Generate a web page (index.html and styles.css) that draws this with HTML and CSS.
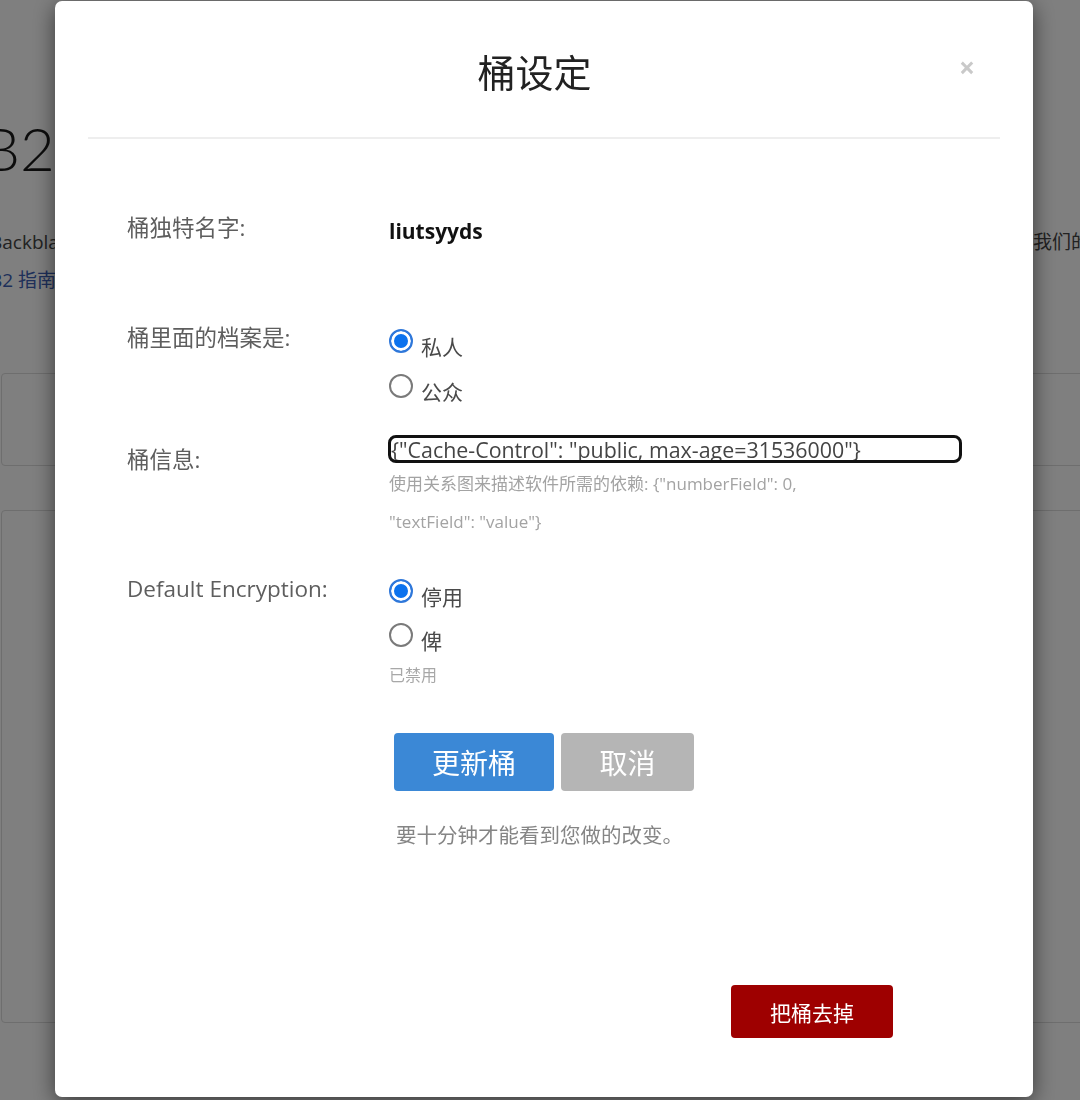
FILE: index.html
```html
<!DOCTYPE html>
<html lang="zh-CN">
<head>
<meta charset="utf-8">
<title>桶设定</title>
<link rel="stylesheet" href="styles.css">
</head>
<body>
<div class="page">
  <h1 class="page-title">B2</h1>
  <div class="intro"><span class="intro-left">Backblaze</span><span class="intro-right">我们的</span></div>
  <a class="guide" href="#">B2 指南</a>
  <div class="card card-top"></div>
  <div class="card card-main"></div>
</div>

<div class="backdrop"></div>

<div class="modal">
  <div class="modal-header">
    <h4 class="modal-title">桶设定</h4>
    <span class="close">×</span>
  </div>
  <div class="modal-body">
    <div class="form-row row-name">
      <div class="label">桶独特名字:</div>
      <div class="value name">liutsyyds</div>
    </div>

    <div class="form-row row-access">
      <div class="label">桶里面的档案是:</div>
      <div class="radio-group">
        <div class="option"><span class="radio checked"></span><span>私人</span></div>
        <div class="option"><span class="radio"></span><span>公众</span></div>
      </div>
    </div>

    <div class="form-row row-info">
      <div class="label label-info">桶信息:</div>
      <div class="info-field">
        <input class="meta-input" type="text" value='{"Cache-Control": "public, max-age=31536000"}' readonly>
        <div class="help">使用关系图来描述软件所需的依赖: {"numberField": 0, "textField": "value"}</div>
      </div>
    </div>

    <div class="form-row row-enc">
      <div class="label">Default Encryption:</div>
      <div class="radio-group enc-group">
        <div class="option"><span class="radio checked"></span><span>停用</span></div>
        <div class="option"><span class="radio"></span><span>俾</span></div>
        <div class="disabled-note">已禁用</div>
      </div>
    </div>

    <div class="actions">
      <button class="btn btn-primary">更新桶</button>
      <button class="btn btn-cancel">取消</button>
    </div>
    <div class="note">要十分钟才能看到您做的改变。</div>

    <div class="footer">
      <button class="btn btn-danger">把桶去掉</button>
    </div>
  </div>
</div>
</body>
</html>
```

FILE: styles.css
```css
html, body {
  margin: 0;
  padding: 0;
}

body {
  width: 1080px;
  height: 1100px;
  overflow: hidden;
  background: #ffffff;
  font-family: "Open Sans", "Noto Sans CJK SC", sans-serif;
  color: #333;
}

/* underlying page */
.page {
  width: 1100px;
  margin-left: -10px;
  display: flex;
  flex-direction: column;
}

.page-title {
  margin: 113px 0 0 -8px;
  font-family: "Lato", "Noto Sans CJK SC", sans-serif;
  font-weight: 300;
  font-size: 60px;
  line-height: 70px;
  color: #1a1a1a;
}

.intro {
  margin-top: 45px;
  display: flex;
  justify-content: space-between;
  font-size: 19px;
  line-height: 28px;
  color: #444;
  white-space: nowrap;
}

.guide {
  margin-top: 10px;
  font-size: 19px;
  line-height: 28px;
  color: #3d5fb5;
  text-decoration: none;
}

.card {
  margin-left: 11px;
  border: 1px solid #dcdcdc;
  border-radius: 4px;
  background: #fff;
}

.card-top {
  margin-top: 79px;
  height: 91px;
}

.card-main {
  margin-top: 44px;
  height: 511px;
}

.backdrop {
  position: fixed;
  inset: 0;
  background: rgba(0, 0, 0, 0.5);
}

/* modal */
.modal {
  position: fixed;
  left: 55px;
  top: 1px;
  width: 978px;
  height: 1096px;
  background: #fff;
  border-radius: 7px;
  box-shadow: 0 5px 22px rgba(0, 0, 0, 0.55);
  display: flex;
  flex-direction: column;
}

.modal-header {
  height: 138px;
  box-sizing: border-box;
  margin: 0 33px;
  padding: 6px 27px 0 22px;
  border-bottom: 2px solid #eeeeee;
  display: flex;
  align-items: center;
}

.modal-title {
  flex: 1;
  margin: 0;
  text-align: center;
  font-weight: 400;
  font-size: 38px;
  line-height: 50px;
  color: #222;
}

.close {
  width: 14px;
  margin-top: -10px;
  font-size: 28px;
  font-weight: 700;
  line-height: 28px;
  color: #c9c9c9;
  text-align: center;
}

.modal-body {
  padding: 74px 72px 0;
  display: flex;
  flex-direction: column;
}

.form-row {
  display: grid;
  grid-template-columns: 262px 1fr;
}

.label {
  font-size: 22.5px;
  line-height: 30px;
  color: #5e5e5e;
}

.value.name {
  padding-top: 3px;
  font-size: 21px;
  line-height: 30px;
  font-weight: 700;
  color: #111;
}

.row-name {
  margin-bottom: 77px;
}

.radio-group {
  padding-top: 9px;
  display: flex;
  flex-direction: column;
  gap: 15px;
}

.option {
  display: flex;
  align-items: flex-start;
  font-size: 21px;
  line-height: 30px;
  color: #4a4a4a;
}

.radio {
  width: 24px;
  height: 24px;
  box-sizing: border-box;
  border-radius: 50%;
  border: 2px solid #7a7a7a;
  margin: -3px 8px 0 0;
  background: #fff;
}

.radio.checked {
  border-color: #2f77d9;
  background: #0b72ee;
  box-shadow: inset 0 0 0 3px #fff;
}

.row-info {
  margin-top: 28px;
}

.label-info {
  padding-top: 10px;
}

.info-field {
  display: flex;
  flex-direction: column;
}

.meta-input {
  width: 574px;
  height: 28px;
  box-sizing: border-box;
  margin: 0 0 0 -1px;
  padding: 0;
  border: 3px solid #111;
  border-radius: 8px;
  font-family: "Open Sans", "Noto Sans CJK SC", sans-serif;
  font-size: 21.4px;
  color: #444;
  background: #fff;
  outline: none;
}

.help {
  margin-top: 2px;
  max-width: 450px;
  font-size: 17px;
  line-height: 38px;
  color: #a3a3a3;
}

.row-enc {
  margin-top: 33px;
}

.enc-group {
  padding-top: 8px;
  gap: 14px;
}

.disabled-note {
  margin-top: -6px;
  font-size: 16px;
  line-height: 22px;
  color: #a8a8a8;
}

.actions {
  margin-top: 47px;
  padding-left: 267px;
  display: flex;
  gap: 7px;
}

.btn {
  border: none;
  border-radius: 4px;
  color: #fff;
  font-family: "Open Sans", "Noto Sans CJK SC", sans-serif;
  padding: 0;
  cursor: pointer;
}

.btn-primary {
  width: 160px;
  height: 58px;
  background: #3b88d6;
  font-size: 28px;
}

.btn-cancel {
  width: 133px;
  height: 58px;
  background: #b5b5b5;
  font-size: 28px;
}

.note {
  margin-top: 29px;
  padding-left: 269px;
  font-size: 20.5px;
  line-height: 30px;
  color: #858585;
}

.footer {
  margin-top: 135px;
  margin-right: 68px;
  display: flex;
  justify-content: flex-end;
}

.btn-danger {
  width: 162px;
  height: 53px;
  background: #9e0000;
  font-size: 21px;
}
```
